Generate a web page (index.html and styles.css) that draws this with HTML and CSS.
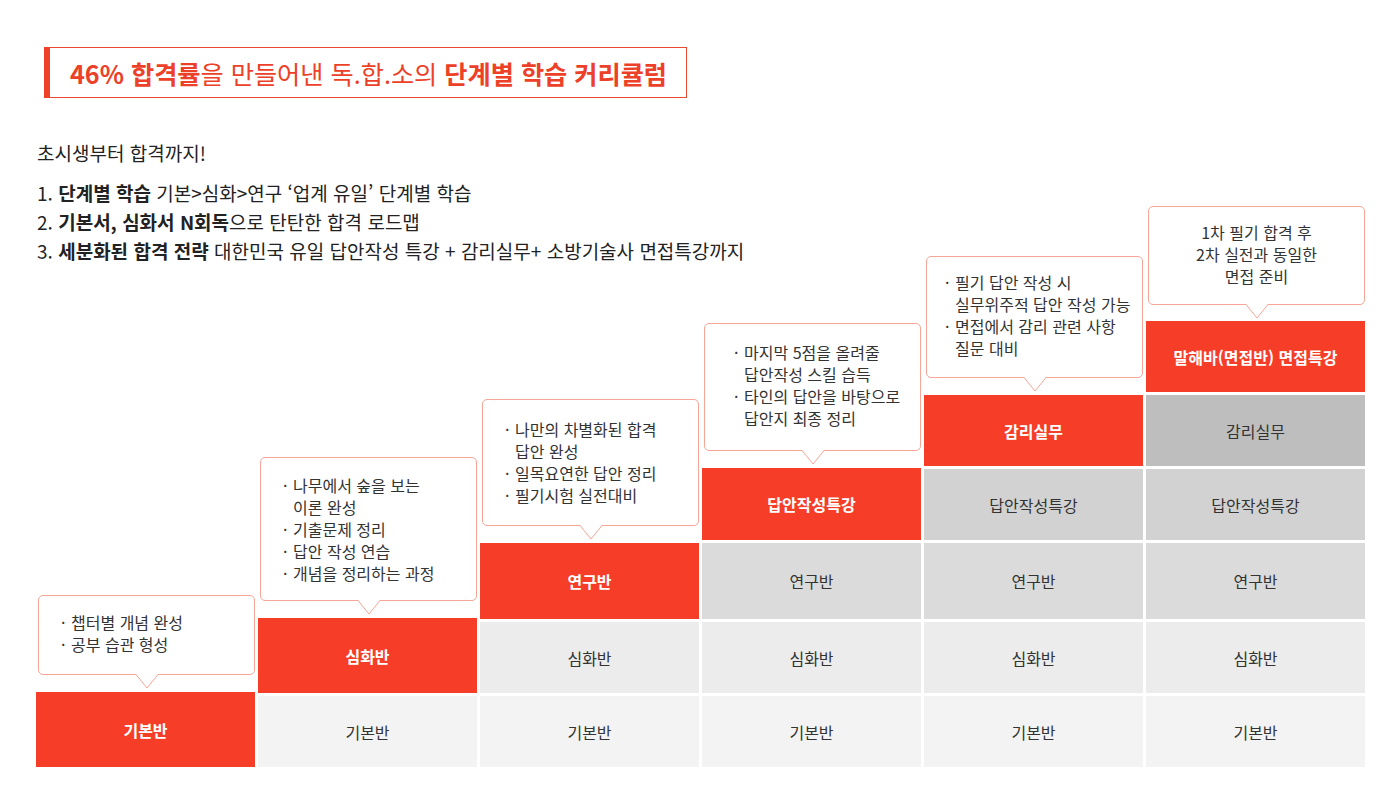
FILE: index.html
```html
<!DOCTYPE html>
<html lang="ko">
<head>
<meta charset="utf-8">
<title>단계별 학습 커리큘럼</title>
<link rel="stylesheet" href="styles.css">
</head>
<body>
<main class="page">
  <header class="title-box">
    <h1 class="title"><strong>46% 합격률</strong>을 만들어낸 독.합.소의 <strong>단계별 학습 커리큘럼</strong></h1>
  </header>

  <section class="stage">
    <div class="intro">
      <p class="lead">초시생부터 합격까지!</p>
      <ol class="points">
        <li>1. <strong>단계별 학습</strong> 기본&gt;심화&gt;연구 ‘업계 유일’ 단계별 학습</li>
        <li>2. <strong>기본서, 심화서 N회독</strong>으로 탄탄한 합격 로드맵</li>
        <li>3. <strong>세분화된 합격 전략</strong> 대한민국 유일 답안작성 특강 + 감리실무+ 소방기술사 면접특강까지</li>
      </ol>
    </div>

    <div class="chart">
      <div class="col">
        <div class="bubble b1">
          <ul class="notes">
            <li>챕터별 개념 완성</li>
            <li>공부 습관 형성</li>
          </ul>
          <svg class="tip" width="22" height="15" viewBox="0 0 22 15"><path class="tip-fill" d="M0 0H22L11 14Z"/><path class="tip-line" d="M0 0.5L11 14L22 0.5"/></svg>
        </div>
        <div class="cell lv1 hot">기본반</div>
      </div>

      <div class="col">
        <div class="bubble b2">
          <ul class="notes">
            <li>나무에서 숲을 보는<br>이론 완성</li>
            <li>기출문제 정리</li>
            <li>답안 작성 연습</li>
            <li>개념을 정리하는 과정</li>
          </ul>
          <svg class="tip" width="22" height="15" viewBox="0 0 22 15"><path class="tip-fill" d="M0 0H22L11 14Z"/><path class="tip-line" d="M0 0.5L11 14L22 0.5"/></svg>
        </div>
        <div class="cell lv2 hot">심화반</div>
        <div class="cell lv1">기본반</div>
      </div>

      <div class="col">
        <div class="bubble b3">
          <ul class="notes">
            <li>나만의 차별화된 합격<br>답안 완성</li>
            <li>일목요연한 답안 정리</li>
            <li>필기시험 실전대비</li>
          </ul>
          <svg class="tip" width="22" height="15" viewBox="0 0 22 15"><path class="tip-fill" d="M0 0H22L11 14Z"/><path class="tip-line" d="M0 0.5L11 14L22 0.5"/></svg>
        </div>
        <div class="cell lv3 hot">연구반</div>
        <div class="cell lv2">심화반</div>
        <div class="cell lv1">기본반</div>
      </div>

      <div class="col">
        <div class="bubble b4">
          <ul class="notes">
            <li>마지막 5점을 올려줄<br>답안작성 스킬 습득</li>
            <li>타인의 답안을 바탕으로<br>답안지 최종 정리</li>
          </ul>
          <svg class="tip" width="22" height="15" viewBox="0 0 22 15"><path class="tip-fill" d="M0 0H22L11 14Z"/><path class="tip-line" d="M0 0.5L11 14L22 0.5"/></svg>
        </div>
        <div class="cell lv4 hot">답안작성특강</div>
        <div class="cell lv3">연구반</div>
        <div class="cell lv2">심화반</div>
        <div class="cell lv1">기본반</div>
      </div>

      <div class="col">
        <div class="bubble b5">
          <ul class="notes">
            <li>필기 답안 작성 시<br>실무위주적 답안 작성 가능</li>
            <li>면접에서 감리 관련 사항<br>질문 대비</li>
          </ul>
          <svg class="tip" width="22" height="15" viewBox="0 0 22 15"><path class="tip-fill" d="M0 0H22L11 14Z"/><path class="tip-line" d="M0 0.5L11 14L22 0.5"/></svg>
        </div>
        <div class="cell lv5 hot">감리실무</div>
        <div class="cell lv4">답안작성특강</div>
        <div class="cell lv3">연구반</div>
        <div class="cell lv2">심화반</div>
        <div class="cell lv1">기본반</div>
      </div>

      <div class="col">
        <div class="bubble b6">
          <p class="centered">1차 필기 합격 후<br>2차 실전과 동일한<br>면접 준비</p>
          <svg class="tip" width="22" height="15" viewBox="0 0 22 15"><path class="tip-fill" d="M0 0H22L11 14Z"/><path class="tip-line" d="M0 0.5L11 14L22 0.5"/></svg>
        </div>
        <div class="cell lv6 hot">말해바(면접반) 면접특강</div>
        <div class="cell lv5">감리실무</div>
        <div class="cell lv4">답안작성특강</div>
        <div class="cell lv3">연구반</div>
        <div class="cell lv2">심화반</div>
        <div class="cell lv1">기본반</div>
      </div>
    </div>
  </section>
</main>
</body>
</html>
```

FILE: styles.css
```css
* {
  box-sizing: border-box;
}

html, body {
  margin: 0;
  padding: 0;
  background: #ffffff;
}

body {
  font-family: "Noto Sans CJK KR", "Noto Sans", sans-serif;
  color: #222222;
}

.page {
  padding: 47px 0 0 36px;
}

/* ---------- title ---------- */
.title-box {
  margin-left: 8px;
  width: 643px;
  height: 51px;
  border: 1px solid #ea4a30;
  border-left: 6px solid #ee4128;
  display: flex;
  align-items: center;
  padding-left: 20px;
}

.title {
  margin: 0;
  font-size: 25.2px;
  font-weight: 400;
  line-height: 30px;
  color: #ec4128;
  white-space: nowrap;
}

.title strong {
  font-weight: 700;
}

/* ---------- stage: intro + chart ---------- */
.stage {
  margin-top: 40px;
  height: 629px;
  display: grid;
  grid-template-columns: 1fr;
  grid-template-rows: 1fr;
}

.intro,
.chart {
  grid-area: 1 / 1;
}

.intro {
  align-self: start;
  margin-left: 1px;
  font-size: 19px;
  color: #222222;
}

.lead {
  margin: 0;
  line-height: 29px;
}

.points {
  list-style: none;
  margin: 11px 0 0;
  padding: 0;
}

.points li {
  line-height: 29px;
  white-space: nowrap;
}

.points strong {
  font-weight: 700;
}

/* ---------- chart ---------- */
.chart {
  align-self: end;
  display: grid;
  grid-template-columns: repeat(6, 219px);
  column-gap: 3px;
  align-items: end;
}

.col {
  display: flex;
  flex-direction: column;
  gap: 3px;
}

.bubble {
  position: relative;
  margin: 0 0 14px 2px;
  background: #ffffff;
  border: 1px solid #f7a597;
  border-radius: 5px;
  font-size: 16px;
  line-height: 22px;
  color: #333333;
  padding: 15px 8px 18px 22px;
}

.b1 { padding-top: 15px; padding-bottom: 19px; }
.b2 { padding-top: 16px; padding-bottom: 16px; }
.b3 { padding-top: 18px; padding-bottom: 19px; }
.b4 { padding-top: 17px; padding-bottom: 21px; padding-left: 29px; }
.b5 { padding-top: 14px; padding-bottom: 18px; padding-left: 18px; }
.b6 { padding-top: 14px; padding-bottom: 17px; padding-left: 8px; margin-bottom: 13px; }

.notes {
  list-style: none;
  margin: 0;
  padding: 0;
}

.notes li {
  padding-left: 10px;
  white-space: nowrap;
}

.notes li::before {
  content: "·";
  display: inline-block;
  width: 10px;
  margin-left: -10px;
}

.centered {
  margin: 0;
  text-align: center;
  white-space: nowrap;
}

.tip {
  position: absolute;
  top: 100%;
  left: 50%;
  margin-left: -11px;
  display: block;
  overflow: visible;
}

.tip-fill {
  fill: #ffffff;
}

.tip-line {
  fill: none;
  stroke: #f7a597;
  stroke-width: 1;
}

.cell {
  display: flex;
  align-items: center;
  justify-content: center;
  font-size: 16px;
  color: #333333;
  white-space: nowrap;
  height: 71px;
}

.lv1 { background: #f3f3f3; height: 71px; }
.lv2 { background: #ececec; height: 71px; }
.lv3 { background: #dbdbdb; height: 76px; }
.lv4 { background: #d2d2d2; height: 71px; }
.lv5 { background: #bebebe; height: 71px; }
.lv6 { height: 71px; }

.cell.hot {
  background: #f63d27;
  color: #ffffff;
  font-weight: 700;
}

.cell.hot.lv1 { height: 75px; }
.cell.hot.lv2 { height: 75px; }
.cell.hot.lv4 { height: 72px; }
```
